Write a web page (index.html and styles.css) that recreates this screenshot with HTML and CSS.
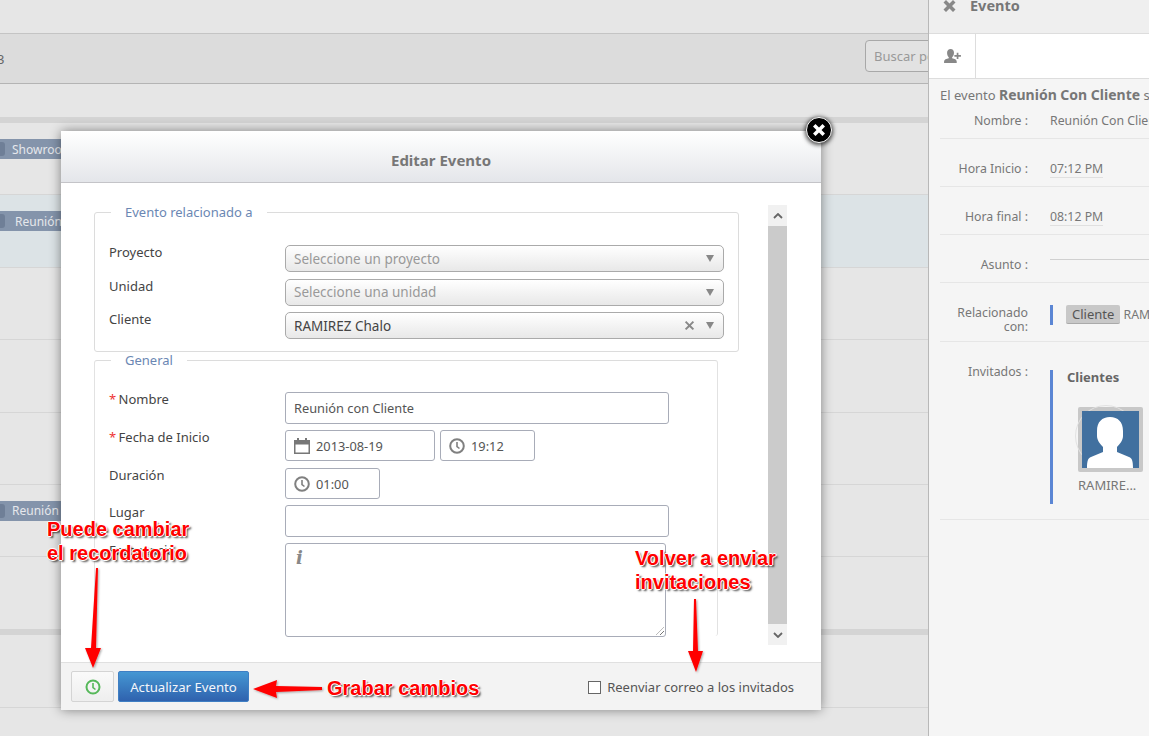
FILE: index.html
```html
<!DOCTYPE html>
<html lang="es">
<head>
  <meta charset="UTF-8">
  <title>Editar Evento</title>
  <link rel="stylesheet" href="styles.css">
</head>
<body>
  <div class="page">
    <div class="calendar">
      <div class="band band-top"></div>
      <div class="band band-tools">
        <span class="band-num">3</span>
        <span class="search">Buscar por</span>
      </div>
      <div class="band band-days"></div>
      <div class="cal-row"><span class="chip"><i></i>Showroom</span></div>
      <div class="cal-row cal-today"><span class="chip chip-r"><i></i>Reunión</span></div>
      <div class="cal-row"></div>
      <div class="cal-row"></div>
      <div class="cal-row"></div>
      <div class="cal-row"><span class="chip"><i></i>Reunión</span></div>
      <div class="cal-row cal-last"></div>
      <div class="cal-row"></div>
    </div>

    <aside class="panel">
      <div class="panel-head">
        <svg class="panel-x" viewBox="0 0 12 12"><path d="M0 2.500L2.500 0 6 3.500 9.500 0 12 2.500 8.500 6 12 9.500 9.500 12 6 8.500 2.500 12 0 9.500 3.500 6z"/></svg>
        <b>Evento</b>
      </div>
      <div class="panel-tools">
        <span class="tool-cell">
          <svg viewBox="0 0 18 16" width="17" height="15"><path fill="#888" d="M7 0c2.200 0 3.600 1.800 3.600 4s-1 3.900-2 4.700v1.200c2.500.6 4.900 1.400 4.900 3.300V15H0v-1.800c0-1.900 2.500-2.700 5-3.300V8.700C4 7.900 3.200 6.200 3.200 4S4.800 0 7 0z"/><path fill="#888" d="M13.500 4h1.800v2.500H18v1.700h-2.700v2.500h-1.800V8.200H11V6.500h2.500z"/></svg>
        </span>
      </div>
      <div class="panel-body">
        <p class="panel-intro">El evento <b>Reunión Con Cliente</b> se ha creado</p>
        <div class="info info-name"><label>Nombre :</label><span>Reunión Con Cliente</span></div>
        <div class="info"><label>Hora Inicio :</label><span class="hour">07:12 PM</span></div>
        <div class="info"><label>Hora final :</label><span class="hour">08:12 PM</span></div>
        <div class="info"><label>Asunto :</label><span class="empty"></span></div>
        <div class="info info-rel"><label>Relacionado con:</label><span class="rel"><em>Cliente</em> RAMIREZ Chalo</span></div>
        <div class="info info-inv">
          <label>Invitados :</label>
          <div class="guests">
            <b>Clientes</b>
            <div class="avatar">
              <svg viewBox="0 0 57 57" width="57" height="57"><rect width="57" height="57" fill="#41709f"/><path fill="#fff" d="M28 6c8 0 13 5 13 14v5c0 4-3 8-6 11v5l12 5c3 1 4 4 4 11H5c0-7 1-10 4-11l12-5v-5c-3-3-6-7-6-11v-5C15 11 20 6 28 6z"/></svg>
            </div>
            <span class="avatar-name">RAMIRE...</span>
          </div>
        </div>
      </div>
    </aside>
  </div>

  <div class="modal">
    <div class="modal-head">Editar Evento</div>
    <div class="modal-body">
      <div class="modal-form">
        <fieldset class="box box-rel">
          <legend>Evento relacionado a</legend>
          <div class="row row-sel"><label>Proyecto</label><div class="select ph"><span>Seleccione un proyecto</span><u></u></div></div>
          <div class="row row-sel"><label>Unidad</label><div class="select ph"><span>Seleccione una unidad</span><u></u></div></div>
          <div class="row row-sel"><label>Cliente</label><div class="select"><span>RAMIREZ Chalo</span><svg class="sel-x" viewBox="0 0 12 12" width="11" height="11"><path fill="#888" d="M1 2.500L2.500 1 6 4.500 9.500 1 11 2.500 7.500 6 11 9.500 9.500 11 6 7.500 2.500 11 1 9.500 4.500 6z"/></svg><u></u></div></div>
        </fieldset>

        <fieldset class="box box-gen">
          <legend>General</legend>
          <div class="row row-name"><label><s>*</s> Nombre</label><div class="input input-lg">Reunión con Cliente</div></div>
          <div class="row row-date">
            <label><s>*</s> Fecha de Inicio</label>
            <div class="input input-date">
              <svg viewBox="0 0 16 16" width="16" height="16"><path fill="#777" d="M3 0h2v2h6V0h2v2h3v14H0V2h3zM1.500 6.500v8h13v-8z"/></svg>
              2013-08-19
            </div>
            <div class="input input-time">
              <svg viewBox="0 0 16 16" width="16" height="16"><circle cx="8" cy="8" r="6.800" fill="none" stroke="#808080" stroke-width="2"/><path d="M8 4v4.500l2.500 2" fill="none" stroke="#808080" stroke-width="1.600"/></svg>
              19:12
            </div>
          </div>
          <div class="row row-dur">
            <label>Duración</label>
            <div class="input input-time">
              <svg viewBox="0 0 16 16" width="16" height="16"><circle cx="8" cy="8" r="6.800" fill="none" stroke="#808080" stroke-width="2"/><path d="M8 4v4.500l2.500 2" fill="none" stroke="#808080" stroke-width="1.600"/></svg>
              01:00
            </div>
          </div>
          <div class="row row-place"><label>Lugar</label><div class="input input-lg"></div></div>
          <div class="row row-notes"><label>Frecuencia</label><div class="input input-area"><span class="info-i">i</span></div></div>
        </fieldset>
      </div>
      <div class="scroll">
        <span class="scroll-btn"><svg viewBox="0 0 10 6" width="10" height="6"><path d="M1 5l4-4 4 4" fill="none" stroke="#666" stroke-width="1.800"/></svg></span>
        <span class="scroll-track"></span>
        <span class="scroll-btn"><svg viewBox="0 0 10 6" width="10" height="6"><path d="M1 1l4 4 4-4" fill="none" stroke="#666" stroke-width="1.800"/></svg></span>
      </div>
    </div>
    <div class="modal-foot">
      <button class="btn-clock">
        <svg viewBox="0 0 16 16" width="16" height="16"><circle cx="8" cy="8" r="6.500" fill="none" stroke="#56b85a" stroke-width="2"/><path d="M8 4v4.500l2.500 2" fill="none" stroke="#56b85a" stroke-width="1.600"/></svg>
      </button>
      <button class="btn-save">Actualizar Evento</button>
      <label class="resend"><i></i>Reenviar correo a los invitados</label>
    </div>
    <span class="modal-close">
      <svg viewBox="0 0 12 12" width="12" height="12"><path fill="#fff" d="M0 2.500L2.500 0 6 3.500 9.500 0 12 2.500 8.500 6 12 9.500 9.500 12 6 8.500 2.500 12 0 9.500 3.500 6z"/></svg>
    </span>
  </div>

  <div class="note note-a">Puede cambiar<br>el recordatorio</div>
  <div class="note note-b">Volver a enviar<br>invitaciones</div>
  <div class="note note-c">Grabar cambios</div>
  <svg class="arrows" viewBox="0 0 1149 736" width="1149" height="736">
    <defs><filter id="sh" x="-30%" y="-30%" width="160%" height="160%"><feDropShadow dx="1" dy="1" stdDeviation="1" flood-color="#000" flood-opacity=".35"/></filter></defs>
    <g fill="#f00" filter="url(#sh)">
      <path d="M96 568l2 0 -2 80h5l-8 20-8-20h6z"/>
      <path d="M694 599h2l2 52h5l-7 21-8-21h5z"/>
      <path d="M322 687v3l-46 2 1 6-24-9 24-9-1 6z"/>
    </g>
  </svg>
</body>
</html>
```

FILE: styles.css
```css
html, body {
  margin: 0;
  padding: 0;
  height: 736px;
  overflow: hidden;
}
body {
  position: relative;
  font-family: "Noto Sans", "Open Sans", sans-serif;
  font-size: 13px;
  color: #444;
  background: #e6e6e6;
}
.page {
  display: flex;
  height: 736px;
}

/* calendario de fondo */
.calendar {
  width: 928px;
  flex: none;
  overflow: hidden;
}
.band {
  box-sizing: border-box;
  border-bottom: 1px solid #c4c4c4;
}
.band-top { height: 34px; }
.band-tools {
  height: 50px;
  background: #dcdcdc;
  border-bottom-color: #b4b4b4;
  display: flex;
  align-items: center;
  justify-content: space-between;
}
.band-num {
  margin-left: -3px;
  color: #666;
}
.search {
  box-sizing: border-box;
  width: 90px;
  height: 32px;
  margin-top: -5px;
  margin-right: -27px;
  padding: 6px 8px;
  border: 1px solid #a8a8a8;
  border-radius: 4px;
  background: #e2e2e2;
  color: #999;
  white-space: nowrap;
  overflow: hidden;
}
.band-days {
  height: 39px;
  border-bottom: 6px solid #d4d4d4;
}
.cal-row {
  box-sizing: border-box;
  height: 72.4px;
  padding-top: 16px;
  border-bottom: 1px solid #d6d6d6;
}
.cal-today { background: #dce3e6; }
.cal-last {
  height: 78px;
  border-bottom: 6px solid #d4d4d4;
}
.chip {
  display: flex;
  align-items: center;
  width: 61px;
  height: 20px;
  overflow: hidden;
  background: #8494ab;
  color: #e6e8ec;
  font-size: 12px;
  white-space: nowrap;
}
.chip i {
  flex: none;
  width: 5px;
  height: 14px;
  margin-right: 7px;
  border-radius: 0 3px 3px 0;
  background: #6f7f97;
}
.chip-r i { margin-right: 10px; width: 5px; }

/* panel derecho */
.panel {
  box-sizing: border-box;
  width: 221px;
  flex: none;
  overflow: hidden;
  border-left: 1px solid #b8b8b8;
  background: #f5f5f5;
  color: #777;
  font-size: 12.3px;
}
.panel-head {
  box-sizing: border-box;
  height: 34px;
  padding-left: 14px;
  display: flex;
  gap: 14px;
  background: #efefef;
  border-bottom: 1px solid #ddd;
  font-size: 14.5px;
  line-height: 11px;
}
.panel-x {
  width: 13px;
  height: 12px;
  fill: #888;
}
.panel-tools {
  height: 44px;
  background: #fff;
  border-bottom: 1px solid #ddd;
}
.tool-cell {
  box-sizing: border-box;
  display: flex;
  align-items: center;
  justify-content: center;
  width: 47px;
  height: 44px;
  border-right: 1px solid #ddd;
}
.panel-body { padding-left: 11px; }
.panel-intro {
  margin: 0;
  height: 33px;
  padding-top: 6px;
  box-sizing: border-box;
  white-space: nowrap;
  font-size: 13px;
}
.panel-intro b { font-size: 14px; }
.info {
  box-sizing: border-box;
  display: flex;
  align-items: flex-start;
  gap: 22px;
  height: 48px;
  padding-top: 23px;
  border-bottom: 1px solid #e6e6e6;
  white-space: nowrap;
  line-height: 14px;
}
.info label {
  flex: none;
  width: 88px;
  text-align: right;
  white-space: normal;
}
.info-name {
  height: 27px;
  padding-top: 2px;
}
.hour {
  border-bottom: 1px solid #e0e0e0;
  padding-bottom: 1px;
}
.empty {
  width: 120px;
  height: 1px;
  margin-top: 1px;
  background: #d0d0d0;
}
.info-rel {
  height: 59px;
  padding-top: 23px;
}
.rel {
  border-left: 3px solid #5b86d4;
  padding-left: 13px;
  margin-top: -1px;
  height: 20px;
  line-height: 20px;
}
.rel em {
  display: inline-block;
  padding: 0 6px;
  font-style: normal;
  font-size: 13px;
  color: #555;
  background: #c8c8c8;
  border-bottom: 1px solid #aaa;
  border-radius: 2px;
  line-height: 18px;
}
.info-inv {
  height: 178px;
  padding-top: 23px;
}
.guests {
  box-sizing: border-box;
  height: 134px;
  margin-top: 5px;
  padding: 0 0 0 14px;
  border-left: 3px solid #5b86d4;
  display: flex;
  flex-direction: column;
  align-items: flex-start;
}
.guests b {
  font-size: 13px;
  color: #666;
}
.avatar {
  position: relative;
  margin: 23px 0 4px 11px;
  padding: 4px;
  width: 57px;
  height: 57px;
  background: #c8c8c8;
  border-radius: 2px;
}
.avatar::before {
  content: "";
  position: absolute;
  left: -3px;
  top: -2px;
  width: 60px;
  height: 60px;
  border: 1px solid #e2e2e2;
  border-radius: 50%;
  z-index: 0;
}
.avatar svg {
  display: block;
  position: relative;
}
.avatar-name {
  margin-left: 11px;
  font-size: 13px;
  line-height: 18px;
}

/* modal */
.modal {
  position: absolute;
  left: 61px;
  top: 131px;
  width: 760px;
  height: 579px;
  background: #fff;
  border-radius: 2px;
  box-shadow: 0 0 12px rgba(0, 0, 0, .45);
  display: flex;
  flex-direction: column;
}
.modal-head {
  box-sizing: border-box;
  height: 52px;
  flex: none;
  line-height: 58px;
  text-align: center;
  font-weight: 700;
  font-size: 15px;
  color: #777;
  background: linear-gradient(#fff, #e4e6ea);
  border-bottom: 1px solid #c4c4c8;
}
.modal-body {
  flex: 1;
  display: flex;
  min-height: 0;
}
.modal-form {
  box-sizing: border-box;
  width: 707px;
  padding: 22px 0 0 33px;
  overflow: hidden;
  flex: none;
}
.scroll {
  width: 19px;
  margin-top: 22px;
  height: 440px;
  display: flex;
  flex-direction: column;
}
.scroll-btn {
  height: 21px;
  flex: none;
  background: #f1f1f1;
  display: flex;
  align-items: center;
  justify-content: center;
}
.scroll-track {
  flex: 1;
  background: #cbcbcb;
}
.box {
  margin: 0;
  padding: 0 14px;
  border: 1px solid #dcdcdc;
  border-radius: 3px;
  box-sizing: border-box;
  min-width: 0;
}
.box legend {
  margin-left: 2px;
  padding: 0 14px;
  color: #6b87b3;
  line-height: 18px;
}
.box-rel {
  width: 645px;
  height: 149px;
  margin-top: -2px;
  padding-top: 24px;
}
.box-gen {
  width: 624px;
  height: 285px;
  margin-top: -1px;
  padding-top: 23px;
  border-bottom: 0;
  border-left-color: #e2e2e2;
  border-right-color: #e2e2e2;
}
.row {
  display: flex;
  align-items: flex-start;
}
.row label {
  flex: none;
  width: 176px;
  color: #444;
  line-height: 15px;
}
.row s {
  color: #e33;
  text-decoration: none;
  margin-right: -1px;
}
.row-sel { height: 33.5px; }
.select {
  box-sizing: border-box;
  width: 441px;
  height: 27px;
  padding: 0 8px;
  display: flex;
  align-items: center;
  gap: 5px;
  border: 1px solid #aaa;
  border-radius: 5px;
  background: linear-gradient(#fff, #e8e8e8);
  color: #444;
  font-size: 13.5px;
}
.select span { flex: 1; }
.select.ph { color: #999; }
.sel-x { margin-right: 6px; }
.select u {
  width: 0;
  height: 0;
  margin-right: 1px;
  border: 4px solid transparent;
  border-top: 7px solid #888;
  border-bottom: 0;
}
.input {
  box-sizing: border-box;
  display: flex;
  align-items: center;
  gap: 6px;
  padding: 0 8px;
  border: 1px solid #a8acb8;
  border-radius: 3px;
  background: #fff;
  color: #555;
  font-size: 12.8px;
}
.input-lg {
  width: 384px;
  height: 32px;
}
.input-date {
  width: 150px;
  height: 31px;
}
.input-time {
  width: 95px;
  height: 31px;
}
.row-name { height: 38px; }
.row-date { height: 38px; gap: 0; }
.row-date .input-time { margin-left: 5px; }
.row-dur { height: 37px; }
.row-place { height: 38px; }
.input-area {
  width: 381px;
  height: 94px;
  align-items: flex-start;
  padding-top: 4px;
  position: relative;
}
.input-area::after {
  content: "";
  position: absolute;
  right: 1px;
  bottom: 1px;
  width: 8px;
  height: 8px;
  background: repeating-linear-gradient(135deg, transparent 0 2px, #777 2px 3px);
  clip-path: polygon(100% 0, 100% 100%, 0 100%);
}
.info-i {
  font-family: "DejaVu Serif", serif;
  font-style: italic;
  font-weight: 700;
  font-size: 18px;
  color: #888;
  margin-left: 2px;
  line-height: 20px;
}
.modal-foot {
  box-sizing: border-box;
  height: 48px;
  flex: none;
  padding: 8px 27px 0 10px;
  display: flex;
  align-items: flex-start;
  gap: 4px;
  background: #f3f3f3;
  border-top: 1px solid #e0e0e0;
}
.modal-foot button { font-family: inherit; }
.btn-clock {
  box-sizing: border-box;
  width: 43px;
  height: 31px;
  padding: 0;
  border: 1px solid #d4d4d4;
  border-radius: 2px;
  background: linear-gradient(#fafafa, #eee);
  display: flex;
  align-items: center;
  justify-content: center;
}
.btn-save {
  box-sizing: border-box;
  width: 131px;
  height: 31px;
  padding: 0;
  border: 1px solid #3f7fc4;
  border-radius: 2px;
  background: linear-gradient(#4597d3, #2f62ae);
  color: #f4f6fa;
  font-size: 13.2px;
}
.resend {
  margin-left: auto;
  display: flex;
  align-items: center;
  gap: 6px;
  height: 32px;
  font-size: 13px;
  color: #555;
}
.resend i {
  box-sizing: border-box;
  width: 13px;
  height: 13px;
  border: 1px solid #666;
  background: #fff;
}
.modal-close {
  position: absolute;
  right: -11px;
  top: -14px;
  box-sizing: border-box;
  width: 26px;
  height: 26px;
  border: 1.5px solid #fff;
  border-radius: 50%;
  background: #000;
  box-shadow: 0 1px 4px 1px rgba(0, 0, 0, .7);
  display: flex;
  align-items: center;
  justify-content: center;
}

/* anotaciones en rojo */
.note {
  position: absolute;
  font-family: "Liberation Sans", Arial, sans-serif;
  font-weight: 700;
  font-size: 20px;
  line-height: 24px;
  color: #f00;
  white-space: nowrap;
  text-shadow: -1px 0 #fff, 1px 0 #fff, 0 -1px #fff, 0 1px #fff, 2px 2px 2px rgba(0, 0, 0, .7);
}
.note-a { left: 47px; top: 517px; }
.note-b { left: 635px; top: 546px; }
.note-c { left: 327px; top: 676px; }
.arrows {
  position: absolute;
  left: 0;
  top: 0;
  pointer-events: none;
}
```
